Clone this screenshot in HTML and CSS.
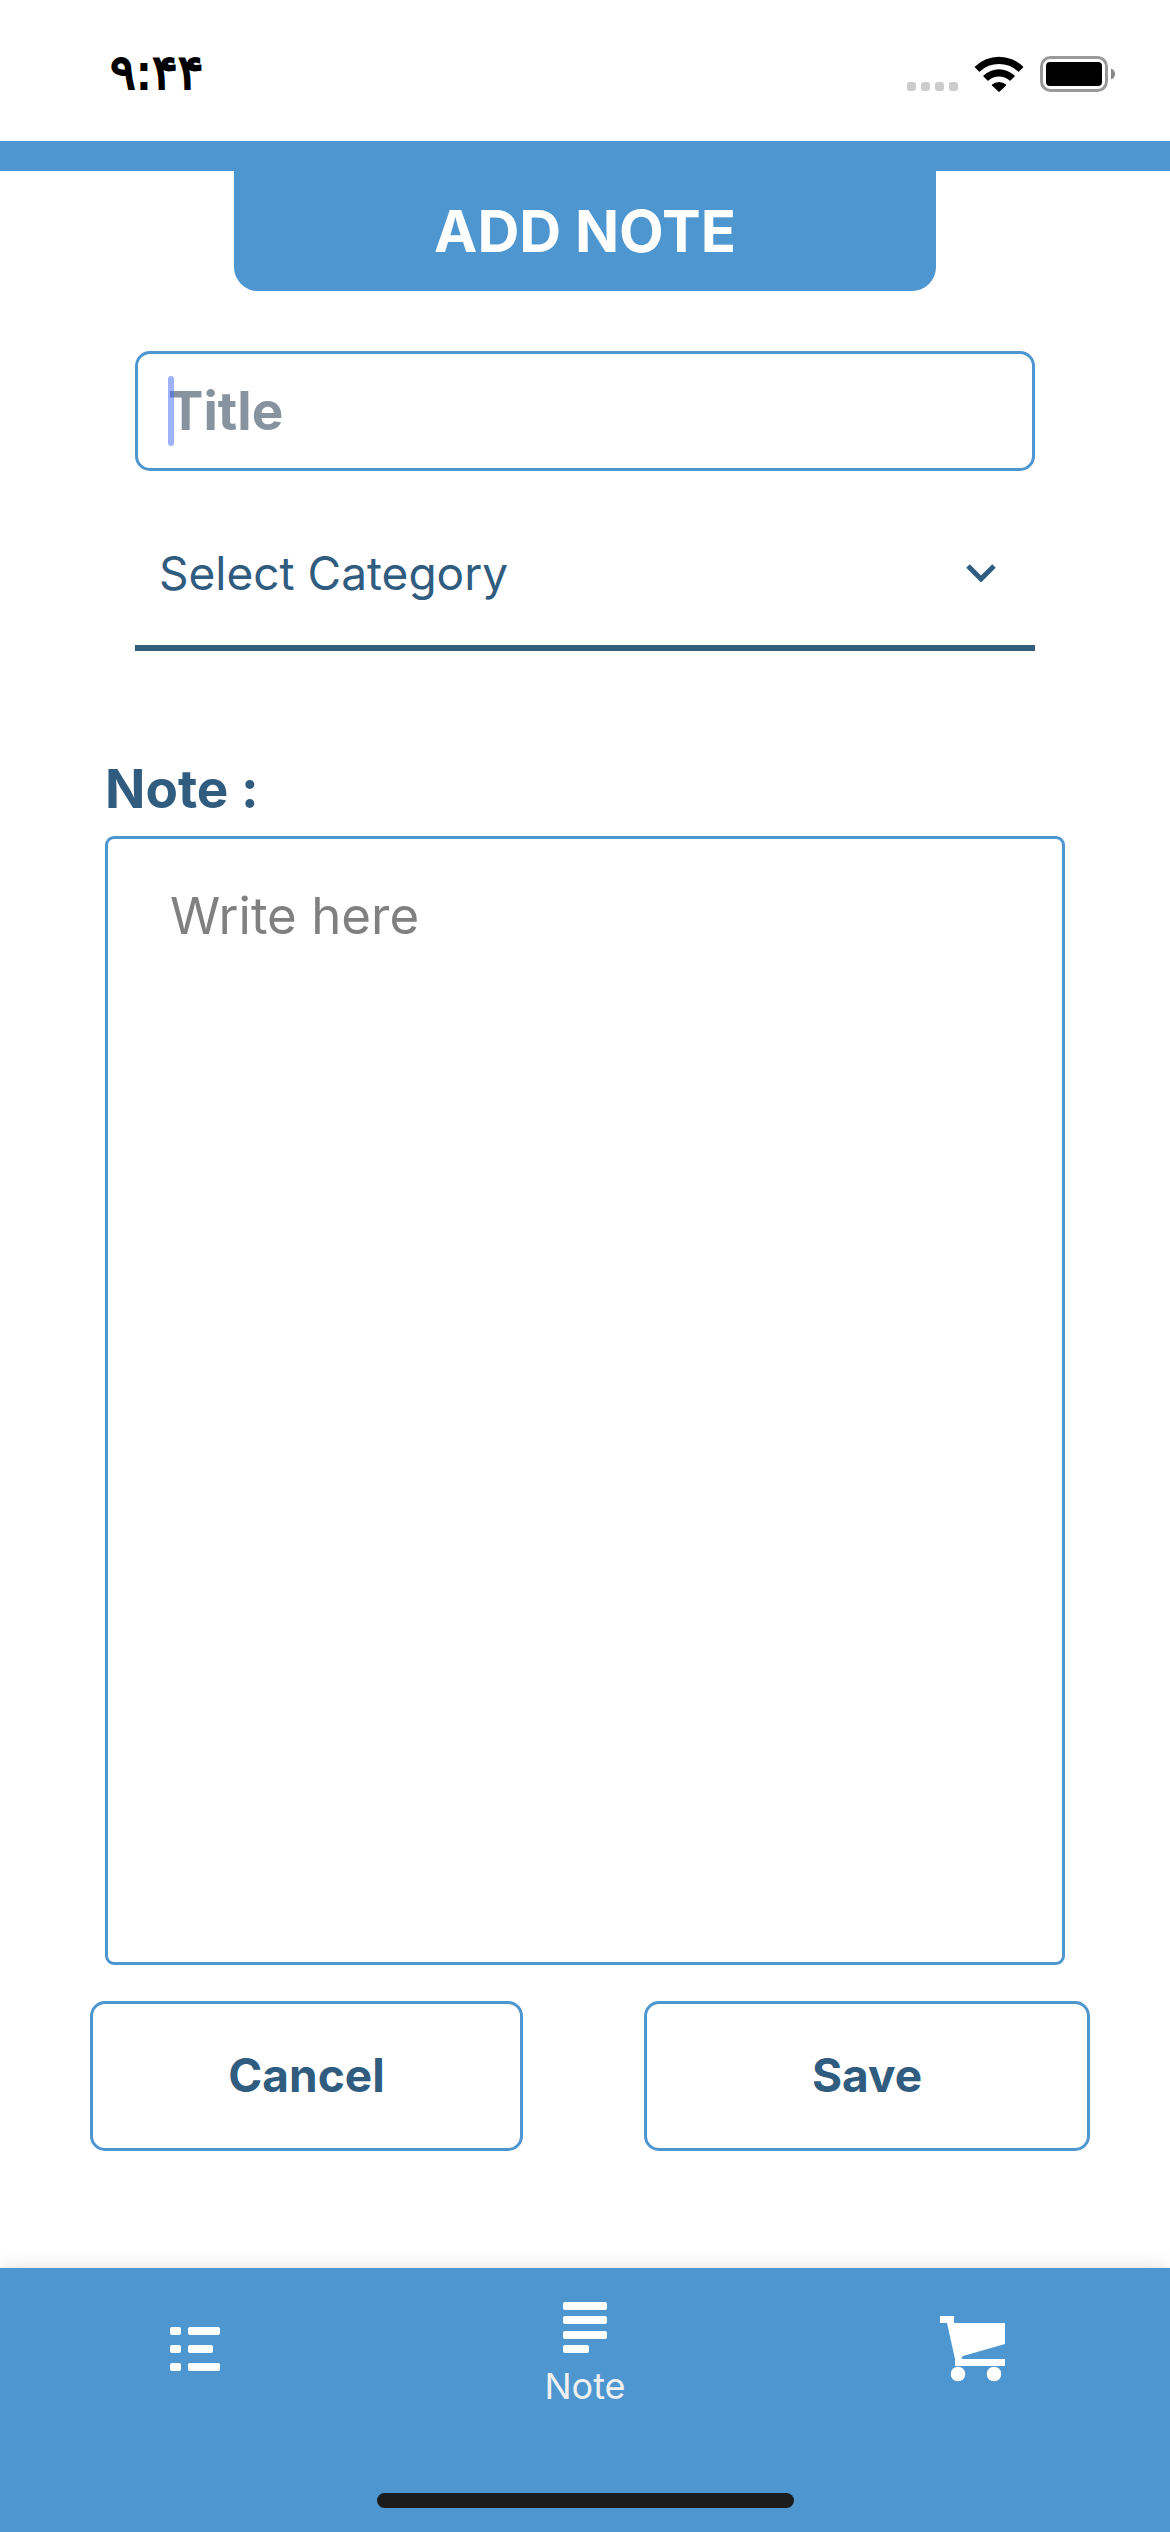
FILE: index.html
```html
<!DOCTYPE html>
<html lang="en">
<head>
  <meta charset="utf-8">
  <meta name="viewport" content="width=device-width, initial-scale=1">
  <title>Add note</title>
  <link rel="stylesheet" href="styles.css">
</head>
<body class="app">
  <div class="status-bar">
    <span class="status-time">۹:۴۴</span>
    <div class="status-icons">
      <svg class="icon-signal" viewBox="0 0 51 36" aria-hidden="true">
        <rect x="0" y="26" width="9" height="9" rx="3"/>
        <rect x="14" y="26" width="9" height="9" rx="3"/>
        <rect x="28" y="26" width="9" height="9" rx="3"/>
        <rect x="42" y="26" width="9" height="9" rx="3"/>
      </svg>
      <svg class="icon-wifi" viewBox="0 0 50 36" aria-hidden="true">
        <path d="M1 10.500A34.500 34.500 0 0 1 49 10.500Q49.500 11 49 11.500L45 15.500Q44.500 16 44 15.500A27.500 27.500 0 0 0 6 15.500Q5.500 16 5 15.500L1 11.500Q.5 11 1 10.500Z"/>
        <path d="M9.500 19.500A22.500 22.500 0 0 1 40.500 19.500Q41 20 40.500 20.500L36.500 24.500Q36 25 35.500 24.500A15.500 15.500 0 0 0 14.500 24.500Q14 25 13.500 24.500L9.500 20.500Q9 20 9.500 19.500Z"/>
        <path d="M18 28.500A11 11 0 0 1 32 28.500Q32.500 29 32 29.500L25.500 35.700Q25 36 24.500 35.700L18 29.500Q17.500 29 18 28.500Z"/>
      </svg>
      <svg class="icon-battery" viewBox="0 0 75 36" aria-hidden="true">
        <rect class="battery-shell" x="1.500" y="1.500" width="65" height="33" rx="9"/>
        <rect x="6" y="6" width="56" height="24" rx="4"/>
        <path class="battery-cap" d="M71 12.500Q75 14 75 18T71 23.500Z"/>
      </svg>
    </div>
  </div>

  <header class="header">
    <h1 class="header-title">ADD NOTE</h1>
  </header>

  <form class="form">
    <div class="fields">
      <div class="title-field">
        <input class="title-input" type="text" placeholder="Title" aria-label="Title">
        <span class="caret" aria-hidden="true"></span>
      </div>
      <div class="category-field">
        <select class="category-select" aria-label="Category">
          <option>Select Category</option>
        </select>
        <svg class="icon-chevron" viewBox="0 0 30 18" aria-hidden="true">
          <path d="M2 2L15 15L28 2"/>
        </svg>
      </div>
    </div>

    <div class="note-field">
      <label class="note-label" for="note">Note :</label>
      <textarea class="note-input" id="note" placeholder="Write here"></textarea>
    </div>

    <div class="actions">
      <button class="button cancel" type="button">Cancel</button>
      <button class="button save" type="submit">Save</button>
    </div>
  </form>

  <nav class="tab-bar">
    <div class="tabs">
      <a class="tab" href="#list" aria-label="List">
        <svg class="icon-list" viewBox="0 0 50 44" aria-hidden="true">
          <rect x="0" y="0" width="11" height="8" rx="2"/>
          <rect x="18" y="0" width="32" height="8" rx="2"/>
          <rect x="0" y="18" width="11" height="8" rx="2"/>
          <rect x="18" y="18" width="25" height="8" rx="2"/>
          <rect x="0" y="36" width="11" height="8" rx="2"/>
          <rect x="18" y="36" width="32" height="8" rx="2"/>
        </svg>
      </a>
      <a class="tab" href="#note" aria-current="page">
        <svg class="icon-note" viewBox="0 0 44 58" aria-hidden="true">
          <rect x="0" y="6" width="44" height="8" rx="2"/>
          <rect x="0" y="20" width="44" height="8" rx="2"/>
          <rect x="0" y="35" width="44" height="8" rx="2"/>
          <rect x="0" y="49" width="26" height="8" rx="2"/>
        </svg>
        <span class="tab-label">Note</span>
      </a>
      <a class="tab" href="#cart" aria-label="Cart">
        <svg class="icon-cart" viewBox="0 0 70 66" aria-hidden="true">
          <path d="M0 0H14V7H65V28L23 40Q20 43 23 43H65V50H15V43L7 7H0Z"/>
          <circle cx="18" cy="58" r="7.300"/>
          <circle cx="54" cy="58" r="7.300"/>
        </svg>
      </a>
    </div>
    <div class="home-indicator"></div>
  </nav>
</body>
</html>
```

FILE: styles.css
```css
* {
  box-sizing: border-box;
}

.app {
  --blue: #4e96cf;
  --navy: #2f5c7f;
  display: flex;
  flex-direction: column;
  min-height: 100vh;
  margin: 0;
  background: #fff;
  color: var(--navy);
  font-family: Inter, "Liberation Sans", sans-serif;
}

/* Status bar */
.status-bar {
  display: flex;
  justify-content: space-between;
  align-items: center;
  height: 141px;
  padding: 6px 55px 0 110px;
  color: #000;
}

.status-time {
  padding-bottom: 4px;
  font-family: "DejaVu Sans", sans-serif;
  font-size: 48px;
  font-weight: 400;
  line-height: 48px;
  -webkit-text-stroke: 2px #000;
}

.status-icons {
  display: flex;
  gap: 16px;
}

.icon-signal {
  width: 51px;
  height: 36px;
  fill: #ccc;
}

.icon-wifi {
  width: 50px;
  height: 36px;
}

.icon-battery {
  width: 75px;
  height: 36px;
}

.battery-shell {
  fill: none;
  stroke: #999;
  stroke-width: 3;
}

.battery-cap {
  fill: #888;
}

/* Header */
.header {
  border-top: 30px solid var(--blue);
}

.header-title {
  width: 60%;
  margin: 0 auto;
  border-radius: 0 0 24px 24px;
  background: var(--blue);
  color: #fff;
  font-size: 58px;
  font-weight: 700;
  line-height: 120px;
  text-align: center;
}

/* Form */
.form {
  display: flex;
  flex: 1;
  flex-direction: column;
  padding: 60px 80px 117px 90px;
}

.fields {
  display: flex;
  flex-direction: column;
  gap: 30px;
  padding: 0 55px 0 45px;
}

.title-field {
  position: relative;
}

.title-input {
  display: block;
  width: 100%;
  height: 120px;
  padding: 0 30px;
  border: 3px solid var(--blue);
  border-radius: 15px;
  outline: none;
  background: transparent;
  color: var(--navy);
  font: 700 53px/64px Inter, sans-serif;
}

.title-input::placeholder {
  color: #87939f;
  opacity: 1;
}

.caret {
  position: absolute;
  top: 25px;
  left: 33px;
  width: 6px;
  height: 70px;
  border-radius: 3px;
  background: rgba(64, 101, 250, 0.5);
}

.category-field {
  display: grid;
  align-items: center;
  border-bottom: 6px solid var(--navy);
}

.category-select {
  grid-area: 1 / 1;
  height: 144px;
  padding: 0 80px 0 24px;
  border: 0;
  appearance: none;
  background: transparent;
  color: var(--navy);
  font: 400 46px/64px Inter, sans-serif;
}

.icon-chevron {
  grid-area: 1 / 1;
  justify-self: end;
  width: 30px;
  height: 18px;
  margin-right: 39px;
  fill: none;
  stroke: var(--navy);
  stroke-width: 5;
  pointer-events: none;
}

.note-field {
  display: flex;
  flex: 1;
  flex-direction: column;
  gap: 15px;
  padding: 106px 25px 0 15px;
}

.note-label {
  font-size: 53px;
  font-weight: 700;
  line-height: 64px;
}

.note-input {
  flex: 1;
  width: 100%;
  min-height: 300px;
  padding: 45px 62px;
  border: 3px solid var(--blue);
  border-radius: 9px;
  outline: none;
  resize: none;
  background: transparent;
  color: var(--navy);
  font: 400 51px/64px Inter, sans-serif;
}

.note-input::placeholder {
  color: #808080;
  opacity: 1;
}

.actions {
  display: flex;
  justify-content: space-between;
  padding-top: 36px;
}

.button {
  height: 150px;
  padding: 0 0 2px;
  border: 3px solid var(--blue);
  border-radius: 15px;
  background: transparent;
  color: var(--navy);
  font: 700 46px/64px Inter, sans-serif;
}

.cancel {
  width: 43.3%;
}

.save {
  width: 44.6%;
}

/* Bottom tab bar */
.tab-bar {
  display: flex;
  flex-direction: column;
  justify-content: space-between;
  height: 264px;
  padding-bottom: 24px;
  background: var(--blue);
  box-shadow: 0 0 18px rgba(0, 0, 0, 0.12);
}

.tabs {
  display: grid;
  grid-template-columns: repeat(3, 1fr);
  height: 162px;
}

.tab {
  display: flex;
  flex-direction: column;
  align-items: center;
  justify-content: center;
  gap: 16px;
  color: #f0f0f0;
  text-decoration: none;
}

.tab svg {
  fill: #fff;
}

.icon-list {
  width: 50px;
  height: 44px;
}

.icon-note {
  width: 44px;
  height: 58px;
}

.icon-cart {
  width: 70px;
  height: 66px;
}

.tab-label {
  font-size: 36px;
  line-height: 32px;
}

.home-indicator {
  align-self: center;
  width: 417px;
  height: 15px;
  border-radius: 8px;
  background: #1c1c1c;
}
```
